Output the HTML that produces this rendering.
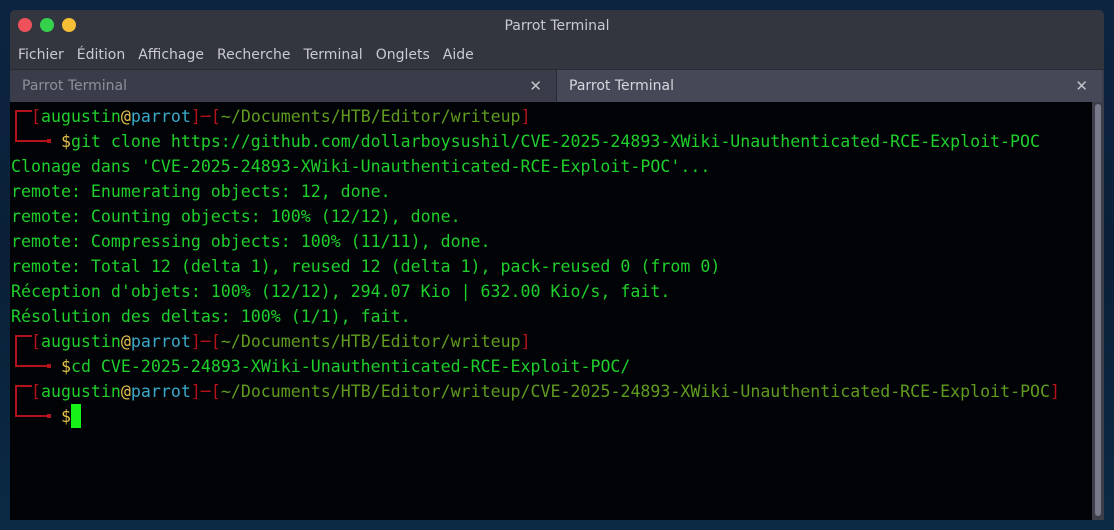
<!DOCTYPE html>
<html><head><meta charset="utf-8"><style>
*{margin:0;padding:0;box-sizing:border-box}
body{width:1114px;height:530px;overflow:hidden;background:linear-gradient(180deg,#0d2440 0%,#0a2038 50%,#0b2a44 100%);font-family:"Liberation Sans","DejaVu Sans",sans-serif;position:relative}
.win{position:absolute;left:10px;top:10px;width:1094px;height:510px;background:#33353f;border-radius:5px 5px 0 0;overflow:hidden}
.title{position:absolute;left:0;top:0;width:100%;height:30px;color:#c9cbd2;font-size:14px;text-align:center;line-height:32px;font-family:"DejaVu Sans",sans-serif}
.dot{position:absolute;top:8px;width:14px;height:14px;border-radius:50%}
.menu{position:absolute;left:8px;top:30px;height:30px;line-height:30px;color:#c9cbd2;font-size:14px;font-family:"DejaVu Sans",sans-serif}
.menu span{margin-right:13px}
.tabs{position:absolute;left:0;top:59px;width:100%;height:33px;background:#3a3d49;border-top:1px solid #2a2c34}
.tab{position:absolute;top:0;height:32px;line-height:32px;font-size:14px;font-family:"DejaVu Sans",sans-serif;padding-left:12px}
.x{position:absolute;right:14px;top:0;font-size:15px;color:#c0c2c8}
.term{position:absolute;left:0;top:92px;width:1082px;height:418px;background:#020306;font-family:"DejaVu Sans Mono",monospace;font-size:16.6px;line-height:25px;color:#1fcf2c;padding:2px 0 0 1px;white-space:pre}
.sb{position:absolute;left:1082px;top:92px;width:12px;height:418px;background:#3c3e4a}
.sb div{position:absolute;left:3px;top:2px;width:6px;height:412px;background:#777a8a;border-radius:3px}
.r{color:#b3121b}.p{color:#5f9b1f}.c{color:#3aa9c9}.y{color:#e4c24c}
.cur{display:inline-block;width:10px;height:24px;background:#16f316;vertical-align:-6px}
.pl{position:absolute;background:#b3121b}
</style></head><body>
<div class="win">
<div class="title">Parrot Terminal</div>
<div class="dot" style="left:8px;background:#f0525c"></div>
<div class="dot" style="left:30px;background:#35d14d"></div>
<div class="dot" style="left:52px;background:#f7bf36"></div>
<div class="menu"><span>Fichier</span><span>Édition</span><span>Affichage</span><span>Recherche</span><span>Terminal</span><span>Onglets</span><span>Aide</span></div>
<div class="tabs">
<div class="tab" style="left:0;width:546px;color:#8d909b">Parrot Terminal<span class="x">✕</span></div>
<div class="tab" style="left:546px;width:546px;background:#454856;color:#d6d8de;border-left:1px solid #2a2c34">Parrot Terminal<span class="x">✕</span></div>
</div>
<div class="term">   augustin<span class="y">@</span><span class="c">parrot</span><span class="r">]─[</span><span class="p">~/Documents/HTB/Editor/writeup</span><span class="r">]</span>
     <span class="y">$</span>git clone https://github.com/dollarboysushil/CVE-2025-24893-XWiki-Unauthenticated-RCE-Exploit-POC
Clonage dans 'CVE-2025-24893-XWiki-Unauthenticated-RCE-Exploit-POC'...
remote: Enumerating objects: 12, done.
remote: Counting objects: 100% (12/12), done.
remote: Compressing objects: 100% (11/11), done.
remote: Total 12 (delta 1), reused 12 (delta 1), pack-reused 0 (from 0)
Réception d'objets: 100% (12/12), 294.07 Kio | 632.00 Kio/s, fait.
Résolution des deltas: 100% (1/1), fait.
   augustin<span class="y">@</span><span class="c">parrot</span><span class="r">]─[</span><span class="p">~/Documents/HTB/Editor/writeup</span><span class="r">]</span>
     <span class="y">$</span>cd CVE-2025-24893-XWiki-Unauthenticated-RCE-Exploit-POC/
   augustin<span class="y">@</span><span class="c">parrot</span><span class="r">]─[</span><span class="p">~/Documents/HTB/Editor/writeup/CVE-2025-24893-XWiki-Unauthenticated-RCE-Exploit-POC</span><span class="r">]</span>
     <span class="y">$</span><span class="cur"></span></div>
<!-- prompt decorations -->
<div style="position:absolute;left:0;top:0">
<div class="pl" style="left:5px;top:100px;width:2px;height:32px"></div>
<div class="pl" style="left:5px;top:100px;width:17px;height:2px"></div>
<div class="pl" style="left:5px;top:130px;width:34px;height:2px"></div>
<div class="pl" style="left:37px;top:129px;width:4px;height:4px"></div>
<div class="r" style="position:absolute;left:21px;top:94px;font:16.6px/25px 'DejaVu Sans Mono',monospace">[</div>
<div class="pl" style="left:5px;top:325px;width:2px;height:32px"></div>
<div class="pl" style="left:5px;top:325px;width:17px;height:2px"></div>
<div class="pl" style="left:5px;top:355px;width:34px;height:2px"></div>
<div class="pl" style="left:37px;top:354px;width:4px;height:4px"></div>
<div class="r" style="position:absolute;left:21px;top:319px;font:16.6px/25px 'DejaVu Sans Mono',monospace">[</div>
<div class="pl" style="left:5px;top:375px;width:2px;height:32px"></div>
<div class="pl" style="left:5px;top:375px;width:17px;height:2px"></div>
<div class="pl" style="left:5px;top:405px;width:34px;height:2px"></div>
<div class="pl" style="left:37px;top:404px;width:4px;height:4px"></div>
<div class="r" style="position:absolute;left:21px;top:369px;font:16.6px/25px 'DejaVu Sans Mono',monospace">[</div>
</div>
<div class="sb"><div></div></div>
</div>
</body></html>
